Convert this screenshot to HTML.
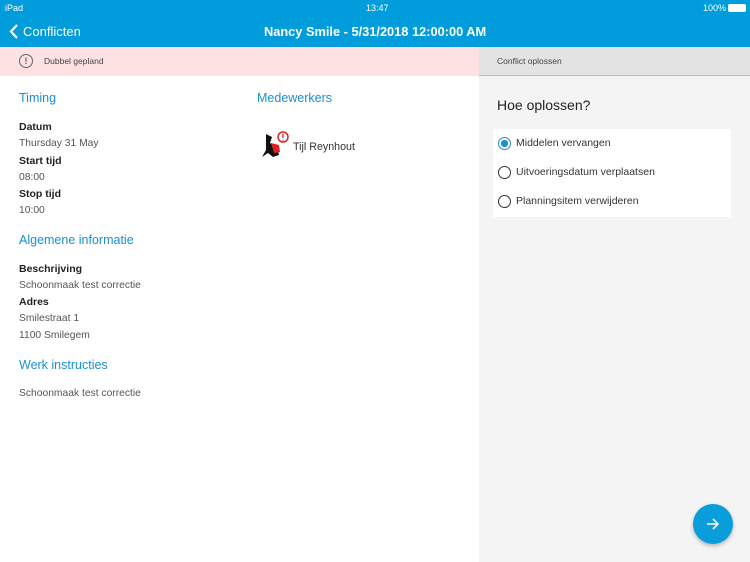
<!DOCTYPE html>
<html><head><style>
*{margin:0;padding:0;box-sizing:border-box}
body{width:750px;height:562px;position:relative;font-family:"Liberation Sans",sans-serif;background:#fff;overflow:hidden}
.a{position:absolute;white-space:nowrap}
.h{color:#1a8fd1;font-size:12.5px}
.l{color:#222;font-size:10.5px;font-weight:bold}
.v{color:#555;font-size:10.3px}
.r{width:13px;height:13px;border:1.3px solid #333;border-radius:50%}
</style></head><body>
<div class="a" style="left:0;top:0;width:750px;height:47px;background:#019cdb"></div>
<div class="a" style="left:5px;top:3px;color:#fff;font-size:9px">iPad</div>
<div class="a" style="left:366px;top:3px;color:#fff;font-size:9px">13:47</div>
<div class="a" style="left:703px;top:3px;color:#fff;font-size:9px">100%</div>
<div class="a" style="left:728px;top:4px;width:18px;height:8px;background:#fff;border-radius:2px"></div>
<svg class="a" style="left:9px;top:24px" width="10" height="15"><path d="M8 1L2 7.5L8 14" stroke="#fff" stroke-width="2.2" fill="none"/></svg>
<div class="a" style="left:23px;top:24px;color:#fff;font-size:13px">Conflicten</div>
<div class="a" style="left:264px;top:24px;color:#fff;font-size:12.8px;font-weight:bold">Nancy Smile - 5/31/2018 12:00:00 AM</div>
<div class="a" style="left:0;top:47px;width:479px;height:29px;background:#fde1e3"></div>
<div class="a" style="left:19px;top:54px;width:14px;height:14px;border:1.3px solid #666;border-radius:50%;font-size:9px;color:#666;text-align:center;line-height:12px;font-weight:bold">!</div>
<div class="a" style="left:44px;top:56px;font-size:8.5px;color:#444">Dubbel gepland</div>
<div class="a" style="left:479px;top:47px;width:271px;height:515px;background:#f4f4f4"></div>
<div class="a" style="left:479px;top:47px;width:271px;height:29px;background:#e3e3e3;border-bottom:1px solid #bbb"></div>
<div class="a" style="left:497px;top:56px;font-size:8.5px;color:#444">Conflict oplossen</div>
<div class="a" style="left:497px;top:97px;font-size:14px;color:#222">Hoe oplossen?</div>
<div class="a" style="left:493px;top:129px;width:238px;height:88px;background:#fff"></div>
<div class="a r" style="left:498px;top:137px;border-color:#1a8fd1;background:radial-gradient(circle,#1a8fd1 3.3px,#fff 3.8px)"></div>
<div class="a r" style="left:498px;top:166px"></div>
<div class="a r" style="left:498px;top:195px"></div>
<div class="a" style="left:516px;top:137px;font-size:10.5px;color:#333">Middelen vervangen</div>
<div class="a" style="left:516px;top:166px;font-size:10.5px;color:#333">Uitvoeringsdatum verplaatsen</div>
<div class="a" style="left:516px;top:195px;font-size:10.5px;color:#333">Planningsitem verwijderen</div>
<div class="a" style="left:693px;top:504px;width:40px;height:40px;border-radius:50%;background:#0a9ddc;box-shadow:0 2px 4px rgba(0,0,0,.25)"></div>
<svg class="a" style="left:705px;top:516px" width="16" height="16"><path d="M2 8H13M8 3L13 8L8 13" stroke="#fff" stroke-width="1.6" fill="none"/></svg>
<div class="a h" style="left:19px;top:91px">Timing</div>
<div class="a l" style="left:19px;top:121px">Datum</div>
<div class="a v" style="left:19px;top:138px">Thursday 31 May</div>
<div class="a l" style="left:19px;top:155px">Start tijd</div>
<div class="a v" style="left:19px;top:172px">08:00</div>
<div class="a l" style="left:19px;top:188px">Stop tijd</div>
<div class="a v" style="left:19px;top:205px">10:00</div>
<div class="a h" style="left:19px;top:233px">Algemene informatie</div>
<div class="a l" style="left:19px;top:263px">Beschrijving</div>
<div class="a v" style="left:19px;top:280px">Schoonmaak test correctie</div>
<div class="a l" style="left:19px;top:296px">Adres</div>
<div class="a v" style="left:19px;top:313px">Smilestraat 1</div>
<div class="a v" style="left:19px;top:330px">1100 Smilegem</div>
<div class="a h" style="left:19px;top:358px">Werk instructies</div>
<div class="a v" style="left:19px;top:388px">Schoonmaak test correctie</div>
<div class="a h" style="left:257px;top:91px">Medewerkers</div>
<svg class="a" style="left:260px;top:130px" width="30" height="32"><path d="M6 4l6 3-2 6 7 4 2 8-6 2-5-4-6 4 4-7z" fill="#111"/><path d="M11 13l8 2 1 7-6 1z" fill="#d22"/><circle cx="23" cy="7" r="5" fill="#fff" stroke="#d22" stroke-width="1.5"/><path d="M23 4v4M23 9.5v1" stroke="#d22" stroke-width="1.3"/></svg>
<div class="a" style="left:293px;top:141px;font-size:10.7px;color:#333">Tijl Reynhout</div>
</body></html>
